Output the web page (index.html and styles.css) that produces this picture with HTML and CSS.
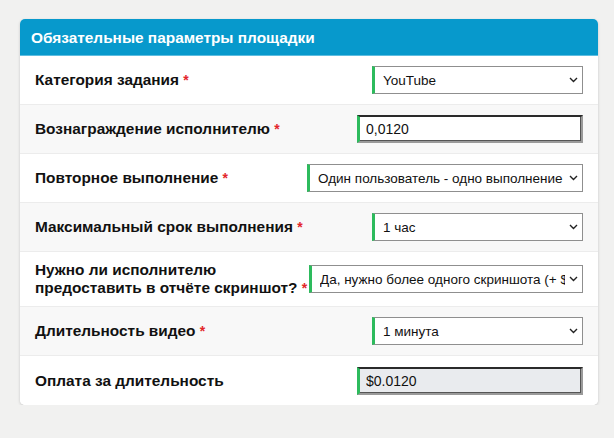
FILE: index.html
```html
<!DOCTYPE html>
<html lang="ru">
<head>
<meta charset="utf-8">
<title>Обязательные параметры площадки</title>
<link rel="stylesheet" href="styles.css">
</head>
<body>
<div class="card">
  <div class="card-header">Обязательные параметры площадки</div>
  <div class="row">
    <div class="label">Категория задания <span class="req">*</span></div>
    <div class="select w-211"><span class="val">YouTube</span><svg class="chev" width="9" height="6" viewBox="0 0 9 6"><path d="M1 1 L4.5 4.5 L8 1" fill="none" stroke="#222" stroke-width="1.4"/></svg></div>
  </div>
  <div class="row alt">
    <div class="label">Вознаграждение исполнителю <span class="req">*</span></div>
    <input class="input w-226" type="text" value="0,0120">
  </div>
  <div class="row">
    <div class="label">Повторное выполнение <span class="req">*</span></div>
    <div class="select w-276"><span class="val">Один пользователь - одно выполнение</span><svg class="chev" width="9" height="6" viewBox="0 0 9 6"><path d="M1 1 L4.5 4.5 L8 1" fill="none" stroke="#222" stroke-width="1.4"/></svg></div>
  </div>
  <div class="row alt">
    <div class="label">Максимальный срок выполнения <span class="req">*</span></div>
    <div class="select w-211"><span class="val">1 час</span><svg class="chev" width="9" height="6" viewBox="0 0 9 6"><path d="M1 1 L4.5 4.5 L8 1" fill="none" stroke="#222" stroke-width="1.4"/></svg></div>
  </div>
  <div class="row tall">
    <div class="label">Нужно ли исполнителю предоставить в отчёте <span class="nowrap">скриншот? <span class="req">*</span></span></div>
    <div class="select w-274"><span class="val">Да, нужно более одного скриншота (+ $</span><svg class="chev" width="9" height="6" viewBox="0 0 9 6"><path d="M1 1 L4.5 4.5 L8 1" fill="none" stroke="#222" stroke-width="1.4"/></svg></div>
  </div>
  <div class="row alt">
    <div class="label">Длительность видео <span class="req">*</span></div>
    <div class="select w-211"><span class="val">1 минута</span><svg class="chev" width="9" height="6" viewBox="0 0 9 6"><path d="M1 1 L4.5 4.5 L8 1" fill="none" stroke="#222" stroke-width="1.4"/></svg></div>
  </div>
  <div class="row last">
    <div class="label">Оплата за длительность</div>
    <input class="input readonly w-226" type="text" value="$0.0120" readonly>
  </div>
</div>
</body>
</html>
```
FILE: styles.css
```css
html, body {
  margin: 0;
  padding: 0;
  background: #f1f1f0;
  font-family: "Liberation Sans", Arial, sans-serif;
  color: #111;
}

.card {
  margin: 19px 0 0 20px;
  width: 578px;
  background: #fff;
  border-radius: 5px;
  box-shadow: 0 1px 3px rgba(0, 0, 0, 0.18);
  overflow: hidden;
}

.card-header {
  background: #0799cc;
  color: #fff;
  font-weight: bold;
  font-size: 15.4px;
  height: 37px;
  line-height: 38px;
  padding-left: 11px;
  border-bottom: 1px solid #5ebde0;
  box-sizing: border-box;
}

.row {
  display: flex;
  align-items: center;
  gap: 0;
  height: 49px;
  padding: 0 15px;
  border-bottom: 1px solid #ececec;
  box-sizing: border-box;
  background: #fff;
}

.row.alt {
  background: #f8f8f8;
}

.row.tall {
  height: 55px;
}

.row.last {
  border-bottom: none;
}

.label {
  flex: 1 1 auto;
  font-weight: bold;
  font-size: 15.4px;
  line-height: 18px;
  color: #111;
}

.nowrap {
  white-space: nowrap;
}

.req {
  color: #e3262b;
  font-size: 14px;
}

.select {
  flex: 0 0 auto;
  margin-left: auto;
  height: 28px;
  box-sizing: border-box;
  display: flex;
  align-items: center;
  background: #fff;
  border: 1px solid #8f8f8f;
  border-left: 3px solid #2dbb5d;
  padding: 0 4px 0 8px;
  font-size: 13.5px;
  color: #111;
  overflow: hidden;
}

.select .val {
  flex: 1 1 auto;
  white-space: nowrap;
  overflow: hidden;
  text-overflow: clip;
}

.select .chev {
  flex: 0 0 auto;
  margin-left: 4px;
}

.input {
  flex: 0 0 auto;
  margin-left: auto;
  height: 28px;
  box-sizing: border-box;
  border-style: solid;
  border-width: 2px 2px 2px 3px;
  border-color: #2a2a2a #9a9a9a #9a9a9a #2dbb5d;
  box-shadow: inset -1px -1px 0 #555;
  padding: 0 0 0 6px;
  font-family: "Liberation Sans", Arial, sans-serif;
  font-size: 14px;
  color: #111;
  background: #fff;
  outline: none;
}

.input.readonly {
  background: #e9ebee;
}

.w-211 { width: 211px; }
.w-226 { width: 226px; }
.w-276 { width: 276px; }
.w-274 { width: 274px; }
```
